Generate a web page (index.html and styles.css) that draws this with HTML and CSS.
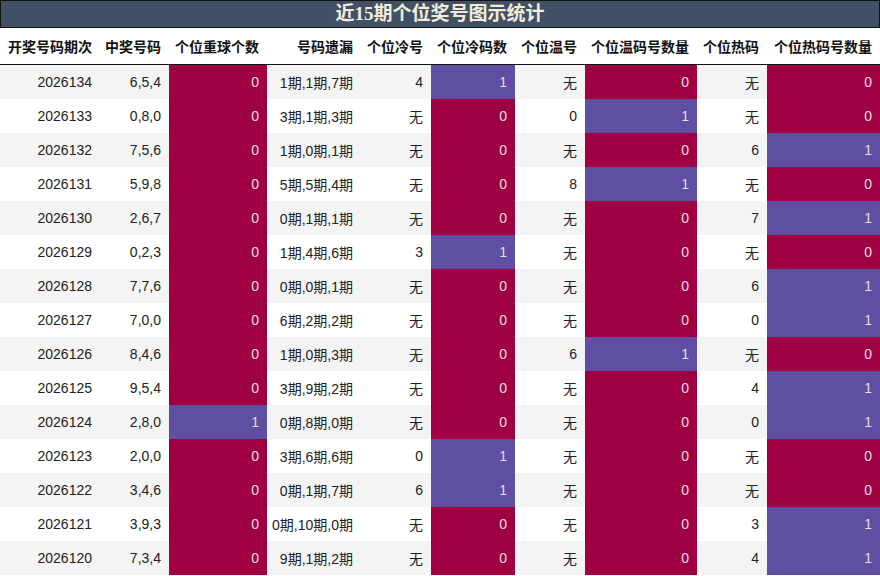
FILE: index.html
```html
<!DOCTYPE html>
<html lang="zh">
<head>
<meta charset="utf-8">
<title>近15期个位奖号图示统计</title>
<link rel="stylesheet" href="styles.css">
</head>
<body>
<div class="title">近15期个位奖号图示统计</div>
<table class="stats">
<colgroup>
<col class="w100"><col class="w69"><col class="w98"><col class="w94"><col class="w70"><col class="w84"><col class="w70"><col class="w112"><col class="w70"><col class="w113">
</colgroup>
<thead>
<tr><th>开奖号码期次</th><th>中奖号码</th><th>个位重球个数</th><th>号码遗漏</th><th>个位冷号</th><th>个位冷码数</th><th>个位温号</th><th>个位温码号数量</th><th>个位热码</th><th>个位热码号数量</th></tr>
</thead>
<tbody>
<tr><td>2026134</td><td>6,5,4</td><td class="r">0</td><td>1期,1期,7期</td><td>4</td><td class="p">1</td><td>无</td><td class="r">0</td><td>无</td><td class="r">0</td></tr>
<tr><td>2026133</td><td>0,8,0</td><td class="r">0</td><td>3期,1期,3期</td><td>无</td><td class="r">0</td><td>0</td><td class="p">1</td><td>无</td><td class="r">0</td></tr>
<tr><td>2026132</td><td>7,5,6</td><td class="r">0</td><td>1期,0期,1期</td><td>无</td><td class="r">0</td><td>无</td><td class="r">0</td><td>6</td><td class="p">1</td></tr>
<tr><td>2026131</td><td>5,9,8</td><td class="r">0</td><td>5期,5期,4期</td><td>无</td><td class="r">0</td><td>8</td><td class="p">1</td><td>无</td><td class="r">0</td></tr>
<tr><td>2026130</td><td>2,6,7</td><td class="r">0</td><td>0期,1期,1期</td><td>无</td><td class="r">0</td><td>无</td><td class="r">0</td><td>7</td><td class="p">1</td></tr>
<tr><td>2026129</td><td>0,2,3</td><td class="r">0</td><td>1期,4期,6期</td><td>3</td><td class="p">1</td><td>无</td><td class="r">0</td><td>无</td><td class="r">0</td></tr>
<tr><td>2026128</td><td>7,7,6</td><td class="r">0</td><td>0期,0期,1期</td><td>无</td><td class="r">0</td><td>无</td><td class="r">0</td><td>6</td><td class="p">1</td></tr>
<tr><td>2026127</td><td>7,0,0</td><td class="r">0</td><td>6期,2期,2期</td><td>无</td><td class="r">0</td><td>无</td><td class="r">0</td><td>0</td><td class="p">1</td></tr>
<tr><td>2026126</td><td>8,4,6</td><td class="r">0</td><td>1期,0期,3期</td><td>无</td><td class="r">0</td><td>6</td><td class="p">1</td><td>无</td><td class="r">0</td></tr>
<tr><td>2026125</td><td>9,5,4</td><td class="r">0</td><td>3期,9期,2期</td><td>无</td><td class="r">0</td><td>无</td><td class="r">0</td><td>4</td><td class="p">1</td></tr>
<tr><td>2026124</td><td>2,8,0</td><td class="p">1</td><td>0期,8期,0期</td><td>无</td><td class="r">0</td><td>无</td><td class="r">0</td><td>0</td><td class="p">1</td></tr>
<tr><td>2026123</td><td>2,0,0</td><td class="r">0</td><td>3期,6期,6期</td><td>0</td><td class="p">1</td><td>无</td><td class="r">0</td><td>无</td><td class="r">0</td></tr>
<tr><td>2026122</td><td>3,4,6</td><td class="r">0</td><td>0期,1期,7期</td><td>6</td><td class="p">1</td><td>无</td><td class="r">0</td><td>无</td><td class="r">0</td></tr>
<tr><td>2026121</td><td>3,9,3</td><td class="r">0</td><td>0期,10期,0期</td><td>无</td><td class="r">0</td><td>无</td><td class="r">0</td><td>3</td><td class="p">1</td></tr>
<tr><td>2026120</td><td>7,3,4</td><td class="r">0</td><td>9期,1期,2期</td><td>无</td><td class="r">0</td><td>无</td><td class="r">0</td><td>4</td><td class="p">1</td></tr>
</tbody>
</table>
</body>
</html>
```
FILE: styles.css
```css
html, body {
  margin: 0;
  padding: 0;
  background: #ffffff;
}
body {
  width: 880px;
  font-family: "Liberation Sans", "Noto Sans CJK SC", sans-serif;
  color: #222222;
}
.title {
  box-sizing: border-box;
  width: 880px;
  height: 28px;
  border: 1px solid #111111;
  background: #415064;
  color: #f3ecd9;
  font-family: "Liberation Serif", "Noto Sans CJK SC", serif;
  font-weight: bold;
  font-size: 19px;
  line-height: 26px;
  text-align: center;
}
.stats {
  width: 880px;
  table-layout: fixed;
  border-collapse: collapse;
  border-spacing: 0;
}
.w100 { width: 100px; }
.w69 { width: 69px; }
.w98 { width: 98px; }
.w94 { width: 94px; }
.w70 { width: 70px; }
.w84 { width: 84px; }
.w112 { width: 112px; }
.w113 { width: 113px; }
.stats th {
  height: 36px;
  padding: 0 8px 0 0;
  text-align: right;
  font-family: "Noto Sans CJK SC", sans-serif;
  font-weight: bold;
  font-size: 14px;
  color: #111111;
  border-bottom: 1px solid #111111;
  white-space: nowrap;
  overflow: visible;
}
.stats td {
  height: 34px;
  padding: 0 8px 0 0;
  text-align: right;
  font-size: 14px;
  white-space: nowrap;
  overflow: visible;
}
.stats tbody tr:nth-child(odd) td {
  background: #f4f4f4;
}
.stats tbody tr:nth-child(even) td {
  background: #ffffff;
}
.stats tbody tr td.r {
  background: #9e0041;
  color: #e6dde3;
}
.stats tbody tr td.p {
  background: #5e4fa2;
  color: #e6dde3;
}
```
